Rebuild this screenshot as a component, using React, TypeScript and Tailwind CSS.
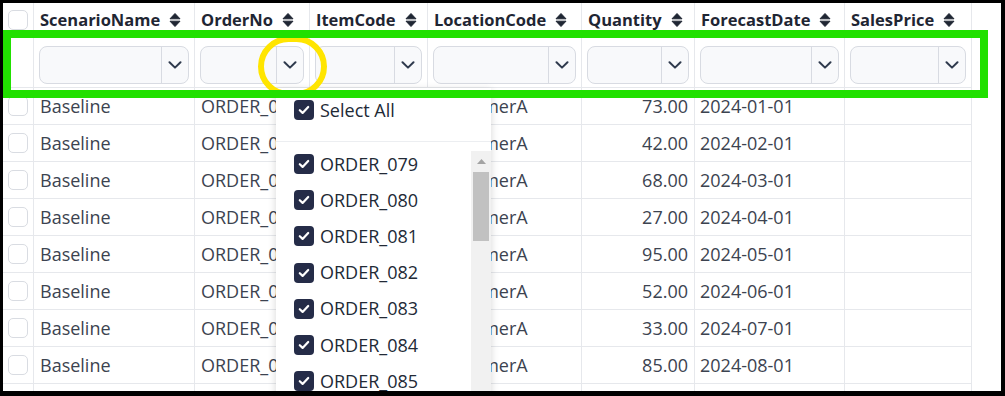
import React from "react";

const columns = [
  "ScenarioName",
  "OrderNo",
  "ItemCode",
  "LocationCode",
  "Quantity",
  "ForecastDate",
  "SalesPrice",
];

const rows = [
  { order: "ORDER_001", qty: "73.00", date: "2024-01-01" },
  { order: "ORDER_002", qty: "42.00", date: "2024-02-01" },
  { order: "ORDER_003", qty: "68.00", date: "2024-03-01" },
  { order: "ORDER_004", qty: "27.00", date: "2024-04-01" },
  { order: "ORDER_005", qty: "95.00", date: "2024-05-01" },
  { order: "ORDER_006", qty: "52.00", date: "2024-06-01" },
  { order: "ORDER_007", qty: "33.00", date: "2024-07-01" },
  { order: "ORDER_008", qty: "85.00", date: "2024-08-01" },
];

const options = [
  "ORDER_079",
  "ORDER_080",
  "ORDER_081",
  "ORDER_082",
  "ORDER_083",
  "ORDER_084",
  "ORDER_085",
];

const grid =
  "grid grid-cols-[31px_161px_115px_118px_154px_113px_150px_127px] w-[969px]";
const cell = "border-r border-b border-[#e6e8ec] flex items-center";

function SortIcon() {
  return (
    <svg width="12" height="16" viewBox="0 0 12 16" className="shrink-0">
      <path d="M6 1.5 L11 6.8 H1 Z" fill="#1f2633" strokeLinejoin="round" stroke="#1f2633" strokeWidth="1" />
      <path d="M6 14.5 L11 9.2 H1 Z" fill="#1f2633" strokeLinejoin="round" stroke="#1f2633" strokeWidth="1" />
    </svg>
  );
}

function Chevron() {
  return (
    <svg width="14" height="8" viewBox="0 0 14 8">
      <path d="M1.5 1.2 L7 6.6 L12.5 1.2" fill="none" stroke="#2f3a4d" strokeWidth="2" strokeLinecap="round" strokeLinejoin="round" />
    </svg>
  );
}

function EmptyBox() {
  return <div className="w-[20px] h-[20px] rounded-[5px] border border-[#d9dce2] bg-white" />;
}

function CheckedBox() {
  return (
    <div className="w-[20px] h-[20px] rounded-[4px] bg-[#252c48] flex items-center justify-center shrink-0">
      <svg width="12" height="10" viewBox="0 0 12 10">
        <path d="M1.8 5.2 L4.6 7.9 L10.2 2" fill="none" stroke="#ffffff" strokeWidth="2.2" strokeLinecap="round" strokeLinejoin="round" />
      </svg>
    </div>
  );
}

function FilterSelect() {
  return (
    <div className="h-[38px] w-full rounded-[8px] border border-[#d8dbe2] bg-[#f8f9fb] flex">
      <div className="flex-1" />
      <div className="w-[27px] border-l border-[#d8dbe2] flex items-center justify-center">
        <Chevron />
      </div>
    </div>
  );
}

export default function App() {
  return (
    <div className="w-[1005px] h-[396px] bg-black pt-[3px] pl-[3px] pr-[4px] pb-[5px] font-['Open_Sans',sans-serif]">
      <div className="relative h-[388px] w-[998px] overflow-hidden bg-white">
        {/* header */}
        <div className={grid}>
          <div className={`${cell} h-[34px] justify-center`}>
            <EmptyBox />
          </div>
          {columns.map((c) => (
            <div key={c} className={`${cell} h-[34px] pl-[6px] pt-[1px] gap-[9px] text-[16.5px] font-bold text-[#1f2633]`}>
              <span>{c}</span>
              <SortIcon />
            </div>
          ))}
        </div>

        {/* filter row */}
        <div className={grid}>
          <div className={`${cell} h-[51px]`} />
          {columns.map((c) => (
            <div key={c} className={`${cell} h-[51px] items-start pt-[9px] px-[5px]`}>
              <FilterSelect />
            </div>
          ))}
        </div>

        {/* rows */}
        {rows.map((r) => (
          <div key={r.order} className={`${grid} text-[18px] text-[#3c4350]`}>
            <div className={`${cell} h-[37px] justify-center`}>
              <EmptyBox />
            </div>
            <div className={`${cell} h-[37px] pl-[6px]`}>Baseline</div>
            <div className={`${cell} h-[37px] pl-[6px] whitespace-nowrap overflow-hidden`}>{r.order}</div>
            <div className={`${cell} h-[37px] pl-[6px] whitespace-nowrap overflow-hidden`}>ITEM_001</div>
            <div className={`${cell} h-[37px] pl-[6px]`}>CustomerA</div>
            <div className={`${cell} h-[37px] justify-end pr-[6px]`}>{r.qty}</div>
            <div className={`${cell} h-[37px] pl-[5px]`}>{r.date}</div>
            <div className={`${cell} h-[37px]`} />
          </div>
        ))}
        {/* next row, only its top edge shows */}
        <div className={grid}>
          <div className={`${cell} h-[37px] justify-center`}>
            <EmptyBox />
          </div>
          {columns.map((c) => (
            <div key={c} className={`${cell} h-[37px]`} />
          ))}
        </div>

        {/* filter dropdown */}
        <div className="absolute left-[273px] top-[85px] w-[215px] h-[320px] bg-white shadow-[0_2px_8px_rgba(0,0,0,0.16)] text-[18px] text-[#222a36]">
          <div className="h-[54px] pt-[12px] pl-[18px] border-b border-[#eceef1]">
            <div className="h-[20px] flex items-center gap-[6px]">
              <CheckedBox />
              <span>Select All</span>
            </div>
          </div>
          <div className="flex">
            <div className="flex-1 pt-[4px] pl-[18px]">
              {options.map((o) => (
                <div key={o} className="h-[36.2px] flex items-center gap-[6px]">
                  <CheckedBox />
                  <span>{o}</span>
                </div>
              ))}
            </div>
            <div className="w-[20px] mt-[9px] bg-[#f1f1f1] flex flex-col items-center">
              <div className="h-[20px] flex items-center justify-center">
                <svg width="9" height="5" viewBox="0 0 9 5">
                  <path d="M4.5 0 L9 5 H0 Z" fill="#a3a3a3" />
                </svg>
              </div>
              <div className="mt-[1px] w-[16px] h-[69px] bg-[#c1c1c1]" />
            </div>
          </div>
        </div>

        {/* annotations */}
        <div className="absolute left-[255px] top-[33px] w-[69px] h-[61px] rounded-full border-[6px] border-[#ffe500]" />
        <div className="absolute left-0 top-[27px] w-[985px] h-[68px] border-[8px] border-[#21e000]" />
      </div>
    </div>
  );
}
